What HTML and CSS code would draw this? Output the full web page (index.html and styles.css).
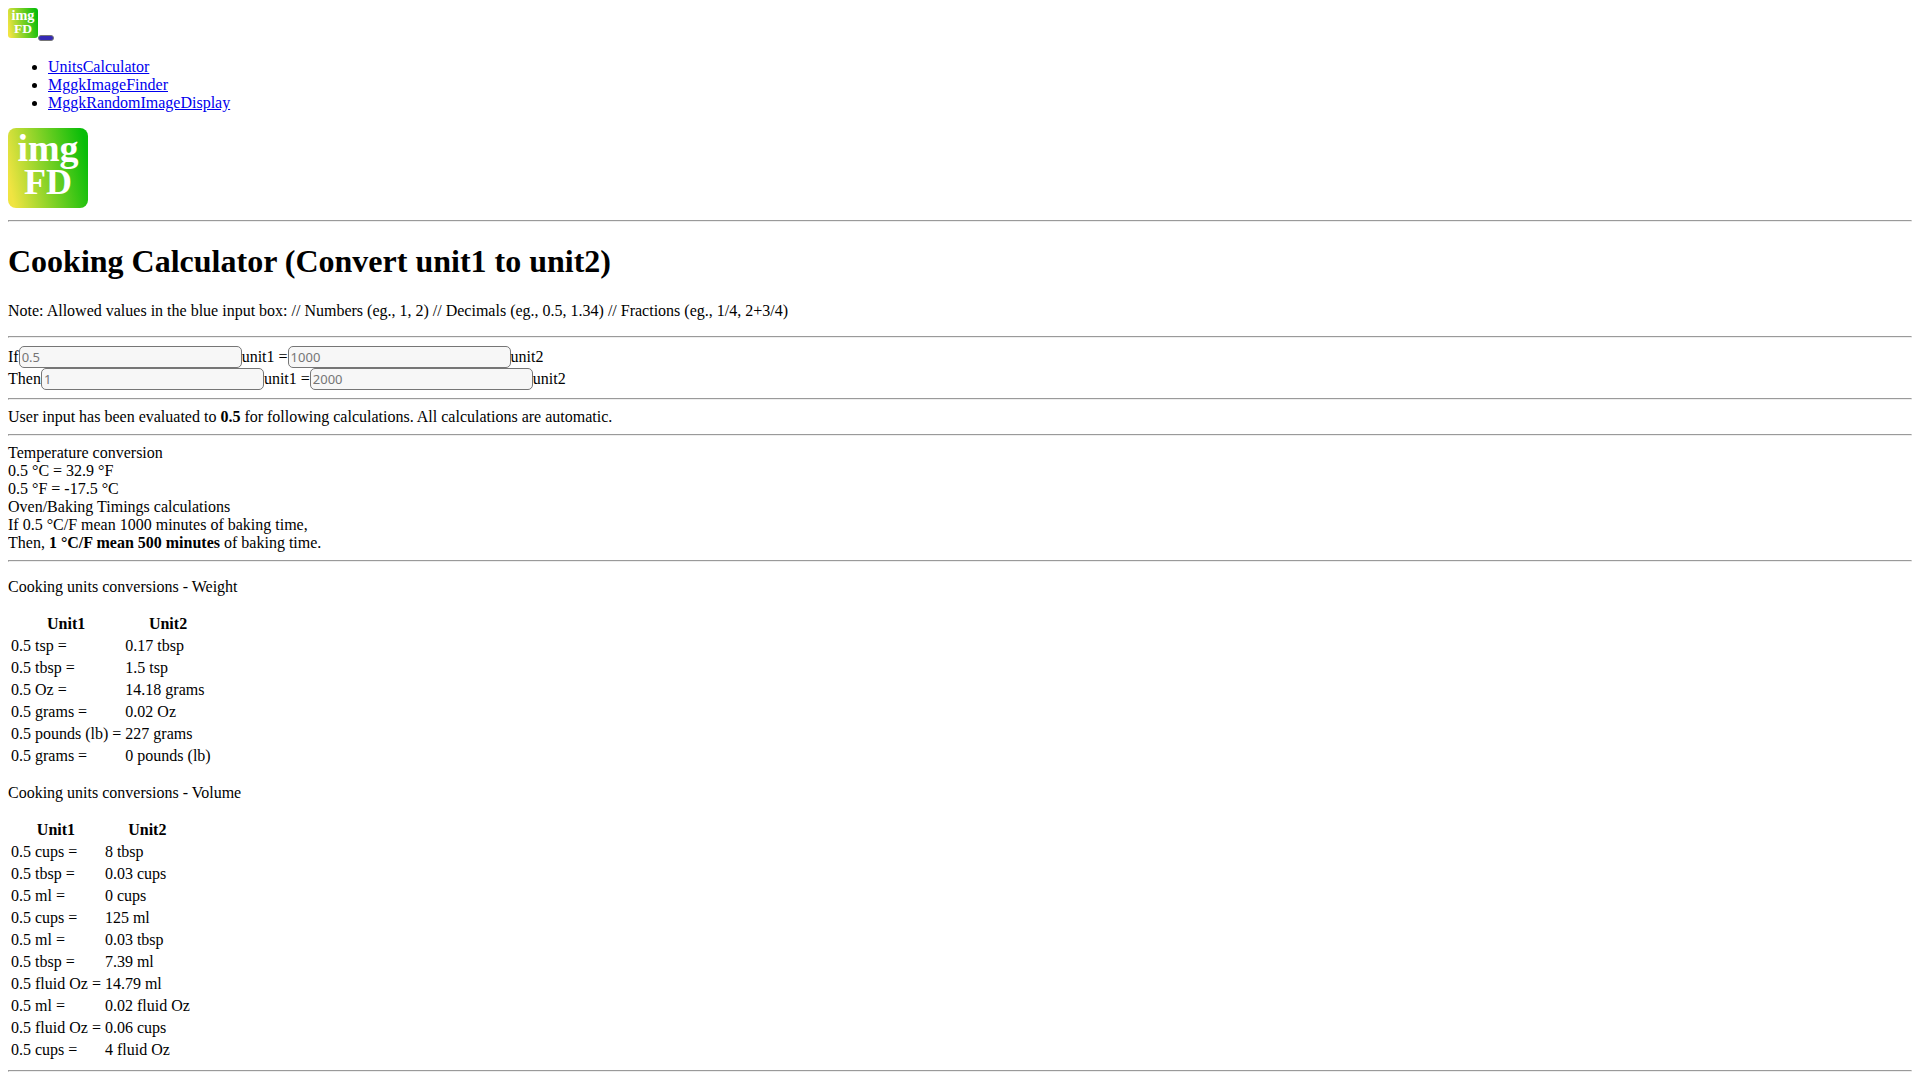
FILE: index.html
```html
<!DOCTYPE html>
<html lang="en">
<head>
    <meta charset="UTF-8">
    <meta name="viewport" content="width=device-width, initial-scale=1.0">
    <title>Cooking Calculator</title>
    <link rel="stylesheet" href="styles.css">
</head>
<body>
    <nav>
        <a href="#"><svg class="logo-small" viewBox="0 0 80 80" role="img" aria-label="imgFD">
            <defs>
                <linearGradient id="logoFill" x1="0" y1="0.6" x2="1" y2="0.4">
                    <stop offset="0" stop-color="#f0e442"/>
                    <stop offset="1" stop-color="#08bd08"/>
                </linearGradient>
            </defs>
            <rect width="80" height="80" rx="8" fill="url(#logoFill)"/>
            <text class="logo-text" x="40" y="33">img</text>
            <text class="logo-text logo-text-bottom" x="40" y="66">FD</text>
        </svg></a><button class="nav-toggle" type="button" aria-label="Toggle navigation"></button>
        <ul>
            <li><a href="#units">UnitsCalculator</a></li>
            <li><a href="#finder">MggkImageFinder</a></li>
            <li><a href="#random">MggkRandomImageDisplay</a></li>
        </ul>
    </nav>

    <div>
        <svg class="logo" viewBox="0 0 80 80" role="img" aria-label="imgFD">
            <rect width="80" height="80" rx="8" fill="url(#logoFill)"/>
            <text class="logo-text" x="40" y="33">img</text>
            <text class="logo-text logo-text-bottom" x="40" y="66">FD</text>
        </svg>
    </div>
    <hr>

    <h1>Cooking Calculator (Convert unit1 to unit2)</h1>
    <p>Note: Allowed values in the blue input box: // Numbers (eg., 1, 2) // Decimals (eg., 0.5, 1.34) // Fractions (eg., 1/4, 2+3/4)</p>
    <hr>

    <form>
        <div class="row">
            <label for="ifUnit1">If</label><input type="text" id="ifUnit1" placeholder="0.5"><label for="ifUnit2">unit1 =</label><input type="text" id="ifUnit2" placeholder="1000">unit2
        </div>
        <div class="row">
            <label for="thenUnit1">Then</label><input type="text" id="thenUnit1" placeholder="1"><label for="thenUnit2">unit1 =</label><input type="text" id="thenUnit2" placeholder="2000">unit2
        </div>
    </form>
    <hr>

    <div>User input has been evaluated to <strong>0.5</strong> for following calculations. All calculations are automatic.</div>
    <hr>

    <div id="units">
        <div>Temperature conversion</div>
        <div>0.5 °C = 32.9 °F</div>
        <div>0.5 °F = -17.5 °C</div>
        <div>Oven/Baking Timings calculations</div>
        <div>If 0.5 °C/F mean 1000 minutes of baking time,</div>
        <div>Then, <strong>1 °C/F mean 500 minutes</strong> of baking time.</div>
    </div>
    <hr>

    <p>Cooking units conversions - Weight</p>
    <table>
        <thead>
            <tr><th>Unit1</th><th>Unit2</th></tr>
        </thead>
        <tbody>
            <tr><td>0.5 tsp =</td><td>0.17 tbsp</td></tr>
            <tr><td>0.5 tbsp =</td><td>1.5 tsp</td></tr>
            <tr><td>0.5 Oz =</td><td>14.18 grams</td></tr>
            <tr><td>0.5 grams =</td><td>0.02 Oz</td></tr>
            <tr><td>0.5 pounds (lb) =</td><td>227 grams</td></tr>
            <tr><td>0.5 grams =</td><td>0 pounds (lb)</td></tr>
        </tbody>
    </table>

    <p>Cooking units conversions - Volume</p>
    <table>
        <thead>
            <tr><th>Unit1</th><th>Unit2</th></tr>
        </thead>
        <tbody>
            <tr><td>0.5 cups =</td><td>8 tbsp</td></tr>
            <tr><td>0.5 tbsp =</td><td>0.03 cups</td></tr>
            <tr><td>0.5 ml =</td><td>0 cups</td></tr>
            <tr><td>0.5 cups =</td><td>125 ml</td></tr>
            <tr><td>0.5 ml =</td><td>0.03 tbsp</td></tr>
            <tr><td>0.5 tbsp =</td><td>7.39 ml</td></tr>
            <tr><td>0.5 fluid Oz =</td><td>14.79 ml</td></tr>
            <tr><td>0.5 ml =</td><td>0.02 fluid Oz</td></tr>
            <tr><td>0.5 fluid Oz =</td><td>0.06 cups</td></tr>
            <tr><td>0.5 cups =</td><td>4 fluid Oz</td></tr>
        </tbody>
    </table>
    <hr>
</body>
</html>
```
FILE: styles.css
```css
body {
    margin: 8px;
    font-family: "Liberation Serif", "Times New Roman", serif;
    font-size: 16px;
    color: #000;
    background-color: #fff;
}
a {
    color: #0000ee;
}
.logo-small {
    width: 30px;
    height: 30px;
}
.logo {
    width: 80px;
    height: 80px;
}
.logo-text {
    font-family: "Liberation Serif", serif;
    font-size: 38px;
    font-weight: bold;
    fill: #fff;
    text-anchor: middle;
}
.logo-text-bottom {
    font-size: 36px;
}
.nav-toggle {
    padding: 2px 7px;
    border: 1px solid #767676;
    border-radius: 3px;
    background-color: #3529b5;
}
.row {
    height: 22px;
}
input {
    box-sizing: border-box;
    width: 223px;
    height: 22px;
    padding: 1px 2px;
    border: 1px solid #767676;
    border-radius: 5px;
    background-color: #f7f7f7;
    font-family: "Noto Sans", sans-serif;
    font-size: 13px;
}
input::placeholder {
    color: #757575;
}
```
